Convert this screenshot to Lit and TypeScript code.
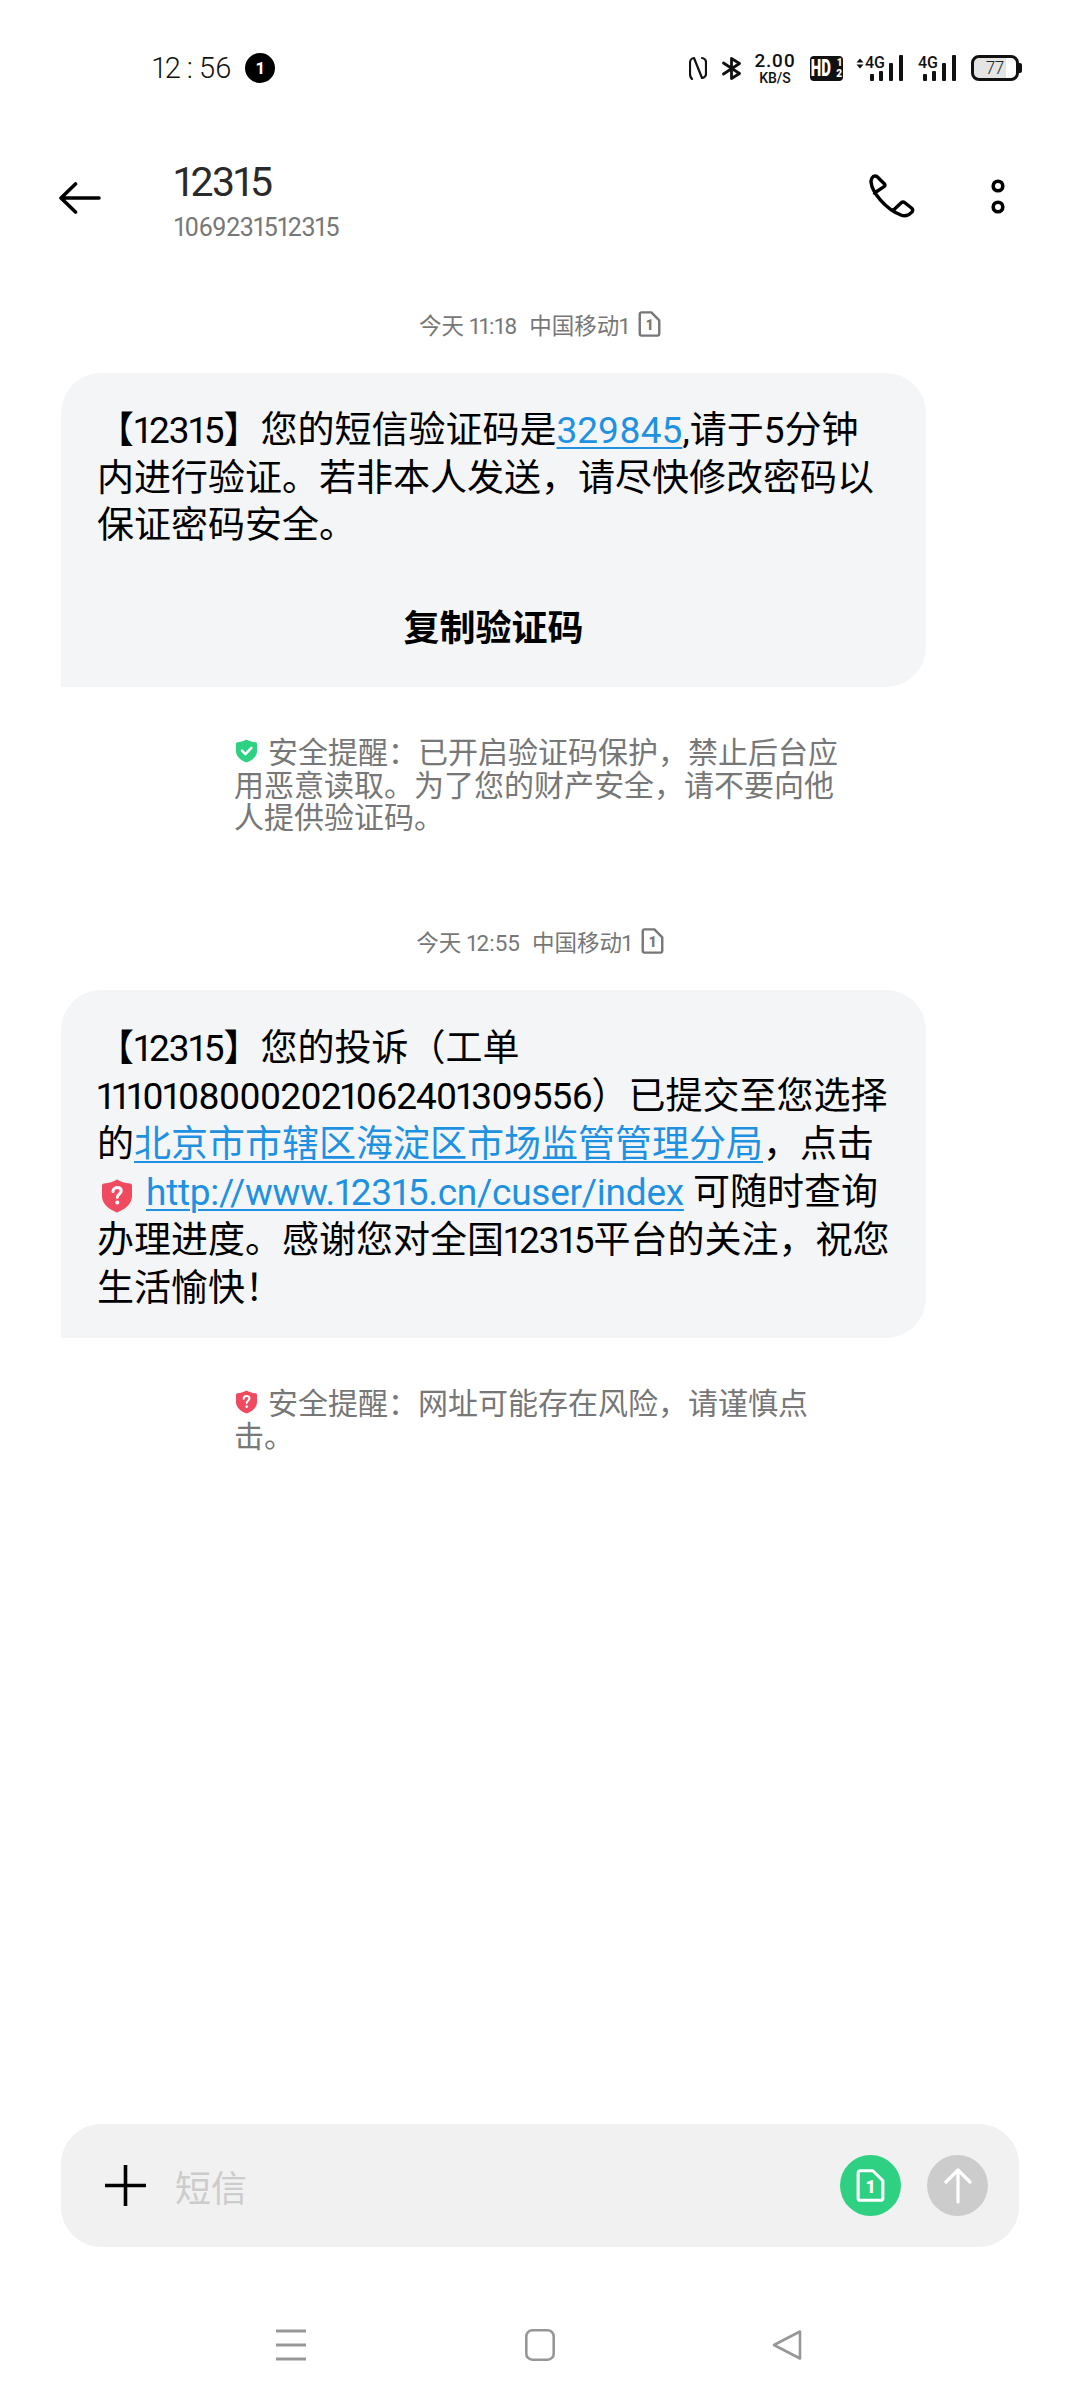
import { LitElement, css, html, svg } from 'lit';
import { customElement } from 'lit/decorators.js';

const sim = (color: string, w: number, h: number) => html`<svg width=${w} height=${h} viewBox="0 0 24 28" fill="none" stroke=${color} stroke-width="2.6" stroke-linejoin="round"><path d="M4 1.500h10l8.500 8.500v14.500a2 2 0 0 1-2 2H3.500a2 2 0 0 1-2-2V3.500a2 2 0 0 1 2-2z" /><text x="12" y="20" class="sim-num" fill=${color} stroke="none">1</text></svg>`;

const shield = (color: string, w: number, h: number, inner: unknown) => html`<svg class="shield" width=${w} height=${h} viewBox="0 0 30 34"><path fill=${color} d="M15 0.5c3.500 2.200 8 3.600 13 4 1.200.1 2 1 2 2.200V17c0 7.500-6 13-15 16.500C6 30 0 24.500 0 17V6.700c0-1.200.8-2.100 2-2.200 5-.4 9.500-1.800 13-4z" />${inner}</svg>`;

const check = svg`<path d="M8.500 16.500l5 5 8.500-9" fill="none" stroke="#fff" stroke-width="3.600" stroke-linecap="round" stroke-linejoin="round" />`;
const question = svg`<path d="M11 12.500c0-2.400 1.800-4 4.200-4s4 1.500 4 3.600c0 3-3.900 3.100-3.900 6.200" fill="none" stroke="#fff" stroke-width="3" stroke-linecap="round" /><circle cx="15.300" cy="23.500" r="2" fill="#fff" />`;

const signal = (w: number, arrows: boolean) => html`
  <svg width=${w} height="32" viewBox="0 0 ${w} 32">
    ${arrows ? svg`<path d="M0.500 10.500l3.500-4 3.500 4zM0.500 12.500l3.500 4 3.500-4z" fill="#111" />` : null}
    <text x=${w - 38} y="16" class="sig-text">4G</text>
    <rect x=${w - 33} y="22" width="4" height="7" rx="1" fill="#111" />
    <rect x=${w - 24} y="19" width="4" height="10" rx="1" fill="#111" />
    <rect x=${w - 14} y="11" width="4" height="18" rx="1" fill="#111" />
    <rect x=${w - 4} y="3" width="4" height="26" rx="1" fill="#111" />
  </svg>
`;

@customElement('app-root')
export class AppRoot extends LitElement {
  static styles = css`
    :host {
      display: flex;
      flex-direction: column;
      width: 1080px;
      height: 2400px;
      background: #fff;
      color: #000;
      font-family: Roboto, "Noto Sans CJK SC", sans-serif;
      font-variant-numeric: proportional-nums;
    }

    /* status bar */
    .status {
      height: 136px;
      display: flex;
      align-items: center;
      box-sizing: border-box;
      padding-left: 152px;
    }
    .clock {
      font-size: 29px;
      font-weight: 300;
      color: #111;
      width: 93px;
      white-space: nowrap;
    }
    .clock i {
      font-style: normal;
      margin: 0 6px;
    }
    .badge {
      width: 30px;
      height: 30px;
      border-radius: 50%;
      background: #000;
      color: #fff;
      font-size: 17px;
      font-weight: 700;
      display: flex;
      align-items: center;
      justify-content: center;
    }
    .status-right {
      margin-left: auto;
      margin-right: 58px;
      display: flex;
      align-items: center;
    }
    .speed {
      width: 42px;
      margin: 0 14px 0 13px;
      display: flex;
      flex-direction: column;
      align-items: center;
      color: #111;
    }
    .speed .num {
      font-size: 19px;
      line-height: 20px;
      font-weight: 500;
      letter-spacing: 0.6px;
    }
    .speed .unit {
      font-size: 14px;
      line-height: 15px;
      font-weight: 500;
    }
    .hd {
      width: 33px;
      height: 25px;
      background: #111;
      border-radius: 4px;
      color: #fff;
      box-sizing: border-box;
      margin-right: 13px;
      position: relative;
    }
    .hd b {
      display: block;
      font-size: 24px;
      line-height: 25px;
      font-weight: 900;
      transform: scaleX(0.62);
      transform-origin: 2px 0;
    }
    .hd span {
      position: absolute;
      right: 1px;
      font-size: 10px;
      line-height: 10px;
      font-weight: 900;
    }
    .hd .top {
      top: 2px;
    }
    .hd .bot {
      bottom: 2px;
    }
    .sig-text {
      font-family: Roboto, sans-serif;
      font-size: 16px;
      font-weight: 500;
      fill: #111;
    }
    .battery {
      width: 48px;
      height: 26px;
      box-sizing: border-box;
      border: 3px solid #111;
      border-radius: 8px;
      margin-left: 15px;
      background: linear-gradient(90deg, #e4e4e4 77%, #fff 77%);
      font-size: 18px;
      font-weight: 300;
      line-height: 20px;
      text-align: center;
      color: #222;
    }
    .nub {
      width: 3px;
      height: 10px;
      background: #111;
      border-radius: 0 2px 2px 0;
    }
    .sim-num {
      font-family: Roboto, sans-serif;
      font-size: 15px;
      font-weight: 900;
      text-anchor: middle;
    }

    /* header */
    .header {
      height: 173px;
      box-sizing: border-box;
      display: flex;
      align-items: flex-start;
      padding: 19px 0 0 59px;
    }
    .back {
      margin: 27px 73px 0 0;
    }
    .title {
      font-size: 41px;
      line-height: 54px;
      letter-spacing: -1.400px;
      color: #2a2a2a;
    }
    .sub {
      font-size: 25px;
      line-height: 32px;
      margin-top: 3px;
      letter-spacing: -0.450px;
      color: #777;
    }
    .call {
      margin: 19px 0 0 auto;
    }
    .more {
      margin: 23px 75px 0 76px;
    }

    /* messages */
    .messages {
      flex: 1;
      min-height: 0;
      padding-left: 61px;
    }
    .stamp {
      height: 30px;
      margin: 0 0 34px -61px;
      display: flex;
      align-items: center;
      justify-content: center;
      font-size: 22.500px;
      color: #777;
    }
    .stamp .date {
      margin-right: 12px;
    }
    .stamp svg {
      margin-left: 9px;
    }
    .stamp.second {
      margin-top: 91.500px;
    }
    .bubble {
      width: 865px;
      box-sizing: border-box;
      background: #f4f5f7;
      border-radius: 40px 40px 40px 0;
      padding: 34px 0 29px 36px;
      font-size: 37px;
      line-height: 47.500px;
      white-space: nowrap;
    }
    .bubble.long {
      padding: 35px 0 25px 36px;
      line-height: 48px;
    }
    .digits {
      letter-spacing: -1px;
    }
    .link {
      color: #1e92e0;
      text-decoration: underline;
      text-underline-offset: 4px;
      text-decoration-thickness: 2px;
    }
    .link.url {
      letter-spacing: -0.250px;
    }
    .copy {
      margin: 56px 0 5px -36px;
      text-align: center;
      font-size: 36px;
      font-weight: 700;
    }
    .bubble .shield {
      vertical-align: -8px;
      margin: 0 14px 0 5px;
    }
    .note {
      margin: 50px 0 0 173px;
      font-size: 30px;
      line-height: 32.500px;
      color: #777;
      white-space: nowrap;
    }
    .note .shield {
      vertical-align: 0;
      margin: 0 11px 0 2px;
    }

    /* composer */
    .composer {
      margin: 0 61px;
      height: 123px;
      background: #f1f1f1;
      border-radius: 40px;
      display: flex;
      align-items: center;
      padding: 0 31px 0 44px;
    }
    .placeholder {
      margin-left: 29px;
      font-size: 36px;
      color: #ccc;
    }
    .circle {
      width: 61px;
      height: 61px;
      border-radius: 50%;
      display: flex;
      align-items: center;
      justify-content: center;
    }
    .sim-btn {
      margin-left: auto;
      background: #2dd181;
    }
    .send {
      margin-left: 26px;
      background: #ccc;
    }

    /* nav bar */
    .nav {
      height: 153px;
      box-sizing: border-box;
      display: flex;
      gap: 218px;
      padding: 82px 0 0 276px;
    }
    .home {
      margin: 0 -1px 0 1px;
    }
  `;

  render() {
    return html`
      <div class="status">
        <div class="clock">12<i>:</i>56</div>
        <div class="badge">1</div>
        <div class="status-right">
          <svg width="18" height="24" viewBox="0 0 18 24" fill="none" stroke="#111" stroke-width="2.200" stroke-linecap="round" stroke-linejoin="round" style="margin-right:15px">
            <path d="M3 23C1 21 1 20 1 18V7C1 4 3 2 5 2L13 22C15 22 17 20 17 18V6C17 4 15 2 13 2" />
          </svg>
          <svg width="19" height="23" viewBox="0 0 19 23" fill="none" stroke="#111" stroke-width="2.800" stroke-linecap="round" stroke-linejoin="round">
            <path d="M1.500 6l16 10.500-8 5V1.500l8 5-16 10.500" />
          </svg>
          <div class="speed">
            <span class="num">2.00</span>
            <span class="unit">KB/S</span>
          </div>
          <div class="hd"><b>HD</b><span class="top">1</span><span class="bot">2</span></div>
          ${signal(47, true)}
          <span style="width:15px"></span>
          ${signal(38, false)}
          <div class="battery">77</div>
          <div class="nub"></div>
        </div>
      </div>

      <div class="header">
        <svg class="back" width="42" height="32" viewBox="0 0 42 32" fill="none" stroke="#000" stroke-width="3.600" stroke-linecap="round" stroke-linejoin="round">
          <path d="M16.500 2L2 16l14.500 14M2 16h38" />
        </svg>
        <div>
          <div class="title">12315</div>
          <div class="sub">1069231512315</div>
        </div>
        <svg class="call" width="46" height="44" viewBox="0 0 46 44" fill="none" stroke="#000" stroke-width="3.400" stroke-linecap="round" stroke-linejoin="round">
          <path d="M3 4C4.500 1.500 7.500 1.500 9 3.500L15.500 10C16.300 11 16 12 15 12.700L5.500 19M2 8C2 6 2.500 5 3 4M2 8C3 18 16 35 33 41.500C35.500 42.300 38 41.500 40 40.500L43 38C44 36.500 43.700 35 42.500 34L35.500 28.500C34.500 27.800 33.500 27.800 32.500 28.500L24 36.500" />
        </svg>
        <svg class="more" width="14" height="36" viewBox="0 0 14 36" fill="none" stroke="#000" stroke-width="3.600">
          <circle cx="7" cy="8" r="4.800" />
          <circle cx="7" cy="29" r="4.800" />
        </svg>
      </div>

      <div class="messages">
        <div class="stamp"><span class="date">今天 11:18</span><span>中国移动1</span>${sim('#777', 23, 26)}</div>
        <div class="bubble">【<span class="digits">12315</span>】您的短信验证码是<span class="link">329845</span>,请于5分钟<br />内进行验证。若非本人发送，请尽快修改密码以<br />保证密码安全。<div class="copy">复制验证码</div></div>
        <div class="note">${shield('#2dd181', 21, 24, check)}安全提醒：已开启验证码保护，禁止后台应<br />用恶意读取。为了您的财产安全，请不要向他<br />人提供验证码。</div>

        <div class="stamp second"><span class="date">今天 12:55</span><span>中国移动1</span>${sim('#777', 23, 26)}</div>
        <div class="bubble long">【<span class="digits">12315</span>】您的投诉（工单<br /><span class="digits">11101080002021062401309556</span>）已提交至您选择<br />的<span class="link">北京市市辖区海淀区市场监管管理分局</span>，点击<br />${shield('#ef4a5f', 30, 34, question)}<span class="link url">http://www.12315.cn/cuser/index</span> 可随时查询<br />办理进度。感谢您对全国<span class="digits">12315</span>平台的关注，祝您<br />生活愉快！</div>
        <div class="note">${shield('#ef4a5f', 21, 24, question)}安全提醒：网址可能存在风险，请谨慎点<br />击。</div>
      </div>

      <div class="composer">
        <svg width="41" height="41" viewBox="0 0 41 41" stroke="#000" stroke-width="3.600">
          <path d="M0 20.500h41M20.500 0v41" />
        </svg>
        <div class="placeholder">短信</div>
        <div class="circle sim-btn">${sim('#fff', 29, 33)}</div>
        <div class="circle send">
          <svg width="28" height="36" viewBox="0 0 28 36" fill="none" stroke="#fff" stroke-width="3.200" stroke-linecap="round" stroke-linejoin="round">
            <path d="M2 14L14 2l12 12M14 2v32" />
          </svg>
        </div>
      </div>

      <div class="nav">
        <svg width="30" height="32" viewBox="0 0 30 32" stroke="#979797" stroke-width="3">
          <path d="M0 2h30M0 16h30M0 30h30" />
        </svg>
        <svg class="home" width="30" height="32" viewBox="0 0 30 32" fill="none" stroke="#979797" stroke-width="2.600">
          <rect x="1.300" y="1.300" width="27.400" height="29.400" rx="6" />
        </svg>
        <svg width="30" height="32" viewBox="0 0 30 32" fill="none" stroke="#979797" stroke-width="2.600" stroke-linejoin="round">
          <path d="M28 2.500v27L2 16z" />
        </svg>
      </div>
    `;
  }
}
